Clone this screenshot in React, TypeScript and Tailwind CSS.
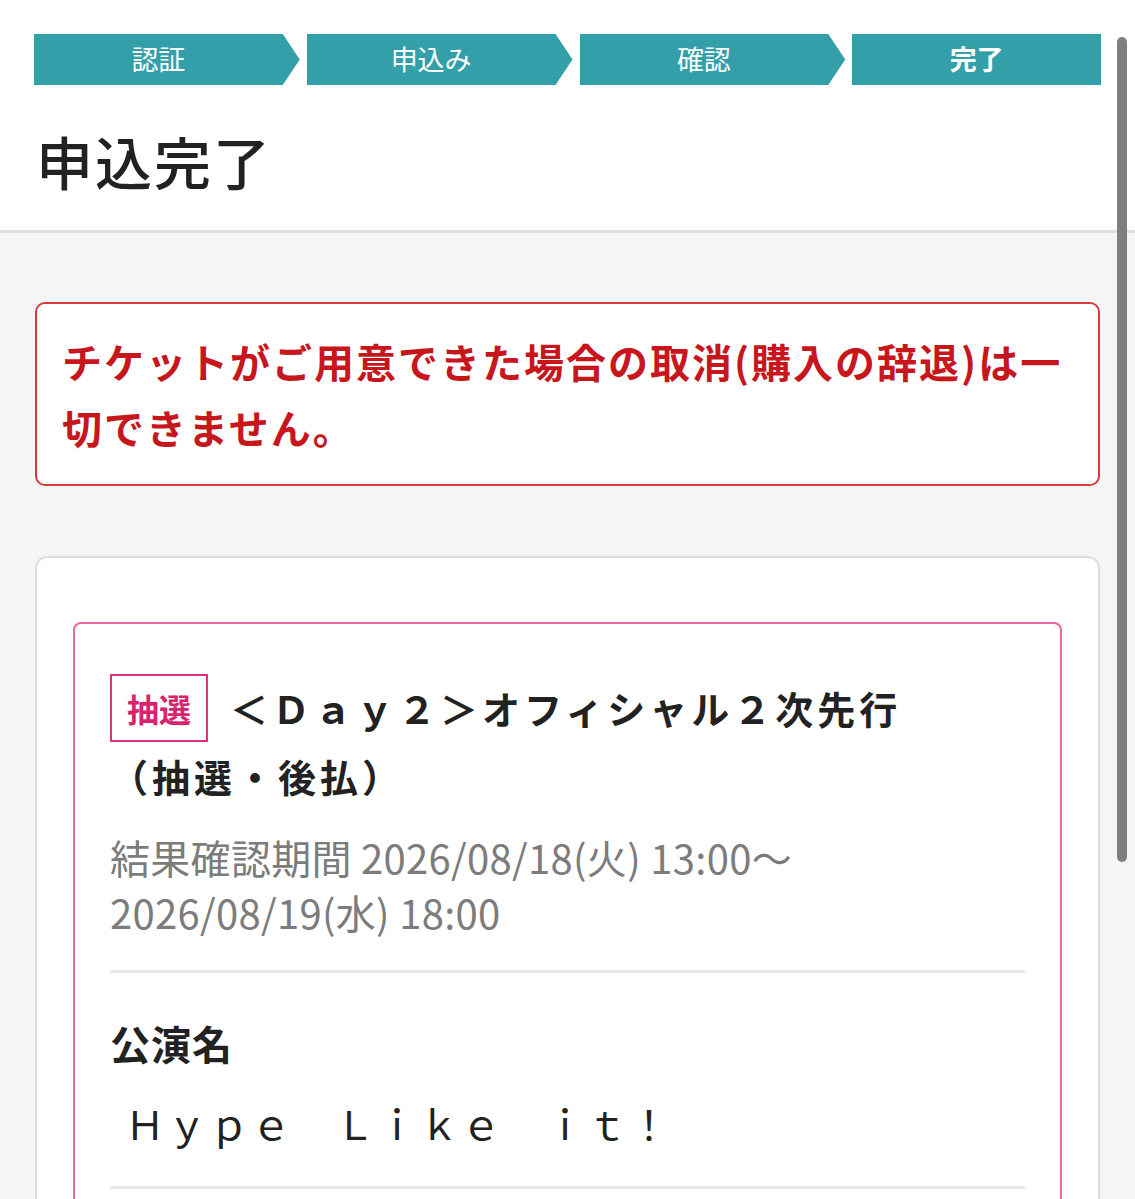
const steps = [
  { label: "認証", current: false },
  { label: "申込み", current: false },
  { label: "確認", current: false },
  { label: "完了", current: true },
];

const font = { fontFamily: '"Noto Sans CJK JP", "Noto Sans", sans-serif' };

const App = () => {
  return (
    <div className="relative min-h-screen bg-[#f5f5f5] text-[#222]" style={font}>
      {/* Header */}
      <header className="bg-white border-b-[3px] border-[#dedede] px-[34px] pt-[34px] pb-[28px]">
        <ol className="flex gap-[7px]">
          {steps.map((step, i) => {
            const last = i === steps.length - 1;
            return (
              <li
                key={step.label}
                className={
                  last
                    ? "w-[249px] h-[51px] bg-[#339fa9] text-white flex items-center justify-center text-[27px] font-bold"
                    : "w-[266px] h-[51px] bg-[#339fa9] text-white flex items-center justify-center pr-[17px] text-[27px] [clip-path:polygon(0_0,calc(100%-17px)_0,100%_50%,calc(100%-17px)_100%,0_100%)]"
                }
              >
                {step.label}
              </li>
            );
          })}
        </ol>
        <h1 className="mt-[33px] text-[57px] leading-[84px] font-medium pl-[2px] tracking-[2px]">申込完了</h1>
      </header>

      <main className="px-[35px] pt-[69px] pb-10">
        {/* Warning */}
        <div className="bg-white border-2 border-[#d63a3f] rounded-[10px] px-[25px] py-[24px]">
          <p className="text-[40px] leading-[66px] font-bold text-[#c8161d] tracking-[2px]">
            チケットがご用意できた場合の取消(購入の辞退)は一
            <br />
            切できません。
          </p>
        </div>

        {/* Card */}
        <div className="mt-[70px] bg-white border-2 border-[#dddddd] rounded-[12px] px-[36px] pt-[64px] pb-10">
          <div className="border-2 border-[#e8699f] rounded-[8px] px-[35px] pt-[50px] pb-10">
            <h2 className="text-[38px] leading-[68px] font-bold tracking-[4px]">
              <span className="inline-block align-top h-[68px] border-2 border-[#d9347f] text-[#d6246e] text-[32px] leading-[64px] px-[15px] mr-[22px] tracking-normal">
                抽選
              </span>
              ＜Ｄａｙ２＞オフィシャル２次先行
              <br />
              （抽選・後払）
            </h2>
            <p className="mt-[20px] text-[40px] leading-[55px] text-[#7c7c7c] tracking-[0.3px]">
              結果確認期間 2026/08/18(火) 13:00～
              <br />
              2026/08/19(水) 18:00
            </p>
            <div className="mt-[30px] h-[3px] bg-[#e8e8e8]" />
            <section className="pt-[40px]">
              <h3 className="text-[40px] leading-[60px] font-bold tracking-[1px]">公演名</h3>
              <p className="mt-[20px] pl-[15px] text-[40px] leading-[60px] tracking-[2px]">Ｈｙｐｅ　Ｌｉｋｅ　ｉｔ！</p>
            </section>
            <div className="mt-[33px] h-[3px] bg-[#e8e8e8]" />
          </div>
        </div>
      </main>

      {/* overlay scrollbar */}
      <div className="absolute left-[1117px] top-[37px] w-[10px] h-[825px] rounded-full bg-[#7f7f7f]" />
    </div>
  );
};

export default App;
